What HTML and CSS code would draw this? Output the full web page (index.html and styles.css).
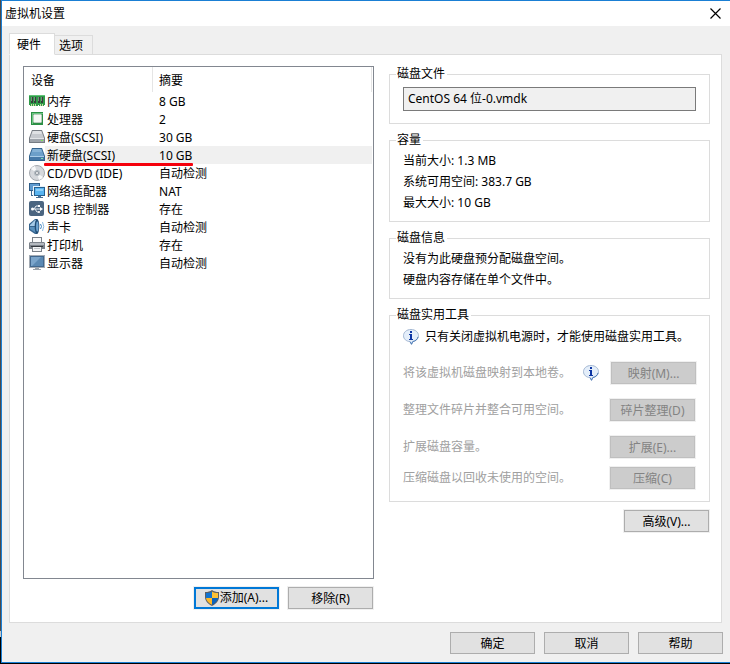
FILE: index.html
```html
<!DOCTYPE html>
<html lang="zh-CN">
<head>
    <meta charset="UTF-8">
    <meta name="viewport" content="width=device-width, initial-scale=1.0">
    <title>虚拟机设置</title>
    <link rel="stylesheet" href="styles.css">
</head>
<body>
    <div class="window">
        <header class="titlebar">
            <h1>虚拟机设置</h1>
            <button type="button" class="close" aria-label="关闭">
                <svg width="11" height="11" viewBox="0 0 11 11"><path d="M.5.5l10 10M10.5.5l-10 10" stroke="#000" stroke-width="1.2"/></svg>
            </button>
        </header>

        <div class="tabs" role="tablist">
            <button type="button" class="tab active" role="tab" aria-selected="true">硬件</button>
            <button type="button" class="tab" role="tab" aria-selected="false">选项</button>
        </div>

        <main class="panel">
            <section class="devices">
                <div class="device-list">
                    <table>
                        <colgroup>
                            <col class="w-icon">
                            <col class="w-name">
                            <col>
                        </colgroup>
                        <thead>
                            <tr>
                                <th colspan="2" class="col-name">设备</th>
                                <th>摘要</th>
                            </tr>
                        </thead>
                        <tbody>
                            <tr>
                                <td class="icon">
                                    <svg width="16" height="16" viewBox="0 0 16 16"><path d="M0 2h16v10H15v1h-5v-1H9v1H1v-1H0z" fill="#2f9a48"/><path d="M0 2h16v1H0z" fill="#62c377"/><path d="M2 4h2v6H2zM5 4h2v6H5zM9 4h2v6H9zM12 4h2v6h-2z" fill="#35403a"/><path d="M2 4h1v4H2zM5 4h1v4H5zM9 4h1v4H9zM12 4h1v4h-1z" fill="#7b8980"/><path d="M2 11h1v2H2zM4 11h1v2H4zM6 11h1v2H6zM11 11h1v2h-1zM13 11h1v2h-1z" fill="#c9d8a2"/></svg>
                                </td>
                                <td class="name">内存</td>
                                <td>8 GB</td>
                            </tr>
                            <tr>
                                <td class="icon">
                                    <svg width="16" height="16" viewBox="0 0 16 16"><path d="M2 1h12v13H2z" fill="#2c8f45"/><path d="M3 2h11v1H4v10H3z" fill="#6cc683"/><path d="M5 3h7l1 1v7l-1 1H5l-1-1V4z" fill="#b9cdbd"/><path d="M5 4h7v7H5z" fill="#f5f8f5"/></svg>
                                </td>
                                <td class="name">处理器</td>
                                <td>2</td>
                            </tr>
                            <tr>
                                <td class="icon">
                                    <svg width="16" height="16" viewBox="0 0 16 16"><path d="M3 1h10l3 8v5H0V9z" fill="#777c83"/><path d="M3.500 2h9l2.500 7H1z" fill="#c6c9ce"/><path d="M4 2h8l1 3H3z" fill="#dfe1e4"/><path d="M1 9h14v4H1z" fill="#9fa4ab"/><path d="M1 9h14v1H1z" fill="#e2e4e7"/><path d="M12 11h2v1h-2z" fill="#7ee45d"/></svg>
                                </td>
                                <td class="name">硬盘(SCSI)</td>
                                <td>30 GB</td>
                            </tr>
                            <tr class="selected">
                                <td class="icon">
                                    <svg width="16" height="16" viewBox="0 0 16 16"><path d="M3 1h10l3 8v5H0V9z" fill="#34648f"/><path d="M3.500 2h9l2.500 7H1z" fill="#6c9fc9"/><path d="M4 2h8l1 3H3z" fill="#85b2d6"/><path d="M1 9h14v4H1z" fill="#4679a8"/><path d="M1 9h14v1H1z" fill="#a8cce8"/><path d="M12 11h2v1h-2z" fill="#7ee4b0"/></svg>
                                </td>
                                <td class="name">新硬盘(SCSI)</td>
                                <td>10 GB</td>
                            </tr>
                            <tr>
                                <td class="icon">
                                    <svg width="16" height="16" viewBox="0 0 16 16"><circle cx="8" cy="8" r="7.500" fill="#d5d8dc" stroke="#a3a8ae"/><path d="M8 8L2 4a7 7 0 0 1 4-3zM8 8l6 4a7 7 0 0 1-4 3z" fill="#f7f8f9"/><circle cx="8" cy="8" r="3" fill="#b3bac1"/><circle cx="8" cy="8" r="1.500" fill="#fff" stroke="#8d959d"/></svg>
                                </td>
                                <td class="name">CD/DVD (IDE)</td>
                                <td>自动检测</td>
                            </tr>
                            <tr>
                                <td class="icon">
                                    <svg width="16" height="16" viewBox="0 0 16 16"><path d="M0 0h11v8H0z" fill="#2e5d88"/><path d="M1 1h9v6H1z" fill="#5f9bd0"/><path d="M2 8h1v4h3v1H2z" fill="#3f6c94"/><path d="M4 3h12v10H4z" fill="#e6f1fa"/><path d="M5 4h11v9H5z" fill="#27608f"/><path d="M6 5h9v7H6z" fill="#58b4f0"/><path d="M7 6h7v2H7z" fill="#8fd0fa"/><path d="M9 13h3v1h2v1H7v-1h2z" fill="#466f94"/></svg>
                                </td>
                                <td class="name">网络适配器</td>
                                <td>NAT</td>
                            </tr>
                            <tr>
                                <td class="icon">
                                    <svg width="16" height="16" viewBox="0 0 16 16"><rect width="15" height="15" rx="2" fill="#4b6580"/><path d="M3 8h9M5 8l2-3h2M6 8l2 3h2" fill="none" stroke="#e8edf2"/><circle cx="3.500" cy="8" r="1.500" fill="#fff"/><path d="M11 6l3 2-3 2z" fill="#fff"/><path d="M9 4h2v2H9z" fill="#fff"/><circle cx="10" cy="11" r="1" fill="#fff"/></svg>
                                </td>
                                <td class="name">USB 控制器</td>
                                <td>存在</td>
                            </tr>
                            <tr>
                                <td class="icon">
                                    <svg width="16" height="16" viewBox="0 0 16 16"><path d="M0 5l6-5h2v15H6l-6-4z" fill="#37658f"/><path d="M1 6l5-5h1v6H1z" fill="#a6cbe8"/><path d="M1 8h6v6l-6-4z" fill="#5b91bd"/><ellipse cx="8" cy="7.500" rx="2.300" ry="7.500" fill="#214d75"/><ellipse cx="8.300" cy="7.500" rx="1.200" ry="5" fill="#6fa5d2"/><path d="M11.500 5q2 2.500 0 5" fill="none" stroke="#3b82bf"/><path d="M13.500 3q2.500 4.500 0 9" fill="none" stroke="#8bb9df"/></svg>
                                </td>
                                <td class="name">声卡</td>
                                <td>自动检测</td>
                            </tr>
                            <tr>
                                <td class="icon">
                                    <svg width="16" height="16" viewBox="0 0 16 16"><path d="M3 0h10v6H3z" fill="#7b8188"/><path d="M4 1h8v5H4z" fill="#fafafa"/><path d="M1 5h14l1 1v6H0V6z" fill="#7c828a"/><path d="M1 6h14v2H1z" fill="#b4b9bf"/><path d="M2 9h12v1H2z" fill="#33383e"/><path d="M3 10h10v5H3z" fill="#7b8188"/><path d="M4 10h8v4H4z" fill="#f4f5f6"/><path d="M5 11h6v1H5z" fill="#c1c5c9"/></svg>
                                </td>
                                <td class="name">打印机</td>
                                <td>存在</td>
                            </tr>
                            <tr>
                                <td class="icon">
                                    <svg width="16" height="16" viewBox="0 0 16 16"><path d="M0 0h16v13H0z" fill="#a3abb4"/><path d="M1 1h14v11H1z" fill="#42688e"/><path d="M2 2h12v9H2z" fill="#5b89b3"/><path d="M2 2h10L3 11H2z" fill="#7ba5cb"/><path d="M6 13h4v1h2v1H4v-1h2z" fill="#9aa2aa"/></svg>
                                </td>
                                <td class="name">显示器</td>
                                <td>自动检测</td>
                            </tr>
                        </tbody>
                    </table>
                </div>
                <div class="buttons">
                    <button type="button" class="btn btn-default">
                        <svg width="14" height="16" viewBox="0 0 14 16"><path d="M7 0c2 1.500 4 2 7 2v5c0 4-3 7-7 9-4-2-7-5-7-9V2c3 0 5-.5 7-2z" fill="#5a5f66"/><path d="M7 1.500V8H1V3c2.500 0 4.500-.5 6-1.500z" fill="#1173d0"/><path d="M7 1.500V8h6V3c-2.500 0-4.500-.5-6-1.500z" fill="#fdc135"/><path d="M1 8h6v6.800C3.500 13 1.300 11 1 8z" fill="#fdb827"/><path d="M13 8H7v6.800c3.500-1.800 5.700-3.800 6-6.800z" fill="#0b63bd"/></svg>
                        <span>添加(A)...</span>
                    </button>
                    <button type="button" class="btn">移除(R)</button>
                </div>
            </section>

            <section class="details">
                <fieldset>
                    <legend>磁盘文件</legend>
                    <input type="text" class="disk-file" value="CentOS 64 位-0.vmdk" aria-label="磁盘文件" readonly>
                </fieldset>

                <fieldset class="info">
                    <legend>容量</legend>
                    <p>当前大小: 1.3 MB</p>
                    <p>系统可用空间: 383.7 GB</p>
                    <p>最大大小: 10 GB</p>
                </fieldset>

                <fieldset class="info">
                    <legend>磁盘信息</legend>
                    <p>没有为此硬盘预分配磁盘空间。</p>
                    <p>硬盘内容存储在单个文件中。</p>
                </fieldset>

                <fieldset class="tools">
                    <legend>磁盘实用工具</legend>
                    <p class="notice">
                        <svg width="16" height="16" viewBox="0 0 16 16"><path d="M8 .5c4.300 0 7.500 2.600 7.500 6.200 0 3-2.300 5.200-5.500 5.900L8.500 15.500 7 12.700C3.200 12.200.5 10 .5 6.700.5 3.100 3.700.5 8 .5z" fill="#e4eefa" stroke="#a3b7d2"/><path d="M15 8c-.6 2.500-2.600 4-5.300 4.600l-1.200 2.600L7.200 12.700" fill="none" stroke="#4d7cb8"/><path d="M7 2h2v2H7zM6 5h3v5h1v1H6v-1h1V6H6z" fill="#0d36a4"/></svg>
                        <span>只有关闭虚拟机电源时，才能使用磁盘实用工具。</span>
                    </p>
                    <div class="tool">
                        <span>将该虚拟机磁盘映射到本地卷。</span>
                        <svg width="16" height="16" viewBox="0 0 16 16"><path d="M8 .5c4.300 0 7.500 2.600 7.500 6.200 0 3-2.300 5.200-5.500 5.900L8.500 15.500 7 12.700C3.200 12.200.5 10 .5 6.700.5 3.100 3.700.5 8 .5z" fill="#e4eefa" stroke="#a3b7d2"/><path d="M15 8c-.6 2.500-2.600 4-5.300 4.600l-1.200 2.600L7.200 12.700" fill="none" stroke="#4d7cb8"/><path d="M7 2h2v2H7zM6 5h3v5h1v1H6v-1h1V6H6z" fill="#0d36a4"/></svg>
                        <button type="button" class="btn" disabled>映射(M)...</button>
                    </div>
                    <div class="tool">
                        <span>整理文件碎片并整合可用空间。</span>
                        <button type="button" class="btn" disabled>碎片整理(D)</button>
                    </div>
                    <div class="tool">
                        <span>扩展磁盘容量。</span>
                        <button type="button" class="btn" disabled>扩展(E)...</button>
                    </div>
                    <div class="tool tight">
                        <span>压缩磁盘以回收未使用的空间。</span>
                        <button type="button" class="btn" disabled>压缩(C)</button>
                    </div>
                </fieldset>

                <button type="button" class="btn advanced">高级(V)...</button>
            </section>
        </main>

        <footer>
            <button type="button" class="btn">确定</button>
            <button type="button" class="btn">取消</button>
            <button type="button" class="btn">帮助</button>
        </footer>
    </div>
</body>
</html>
```

FILE: styles.css
```css
* {
    box-sizing: border-box;
    margin: 0;
    padding: 0;
}

body {
    display: flex;
    min-height: 100vh;
    padding: 0 0 1px 1px;
    background: linear-gradient(#4a4a4c 95%, #c8c8c8 95%, #c8c8c8 96%, #000 96%);
    color: #000;
}

body, button, input {
    font-family: "Noto Sans", "Noto Sans CJK SC", sans-serif;
    font-size: 12px;
    line-height: 16px;
}

svg {
    display: block;
    flex: none;
}

.window {
    flex: 1;
    display: flex;
    flex-direction: column;
    border: 1px solid #1a7fd4;
    border-right: none;
    background-color: #f0f0f0;
}

/* title bar */
.titlebar {
    display: flex;
    align-items: center;
    justify-content: space-between;
    height: 25px;
    padding: 0 9px 0 3px;
    background: white;
}

h1 {
    font-size: 12px;
    font-weight: normal;
}

.close {
    border: none;
    background: none;
}

/* tabs */
.tabs {
    display: flex;
    align-items: flex-end;
    height: 29px;
    margin-bottom: -1px;
    padding: 0 7px;
}

.tab {
    height: 20px;
    padding: 2px 9px 0 4px;
    border: 1px solid #dcdcdc;
    border-left: none;
    background-color: #f0f0f0;
}

.tab.active {
    height: 22px;
    padding: 1px 13px 0 7px;
    border-left: 1px solid #dcdcdc;
    border-bottom-color: white;
    background-color: white;
    z-index: 1;
}

.panel {
    flex: 1;
    display: flex;
    gap: 15px;
    margin: 0 8px 0 7px;
    padding: 11px 11px 13px 13px;
    border: 1px solid #dcdcdc;
    background: white;
}

/* device list */
.devices {
    flex: 351;
    display: flex;
    flex-direction: column;
    gap: 8px;
    min-width: 0;
}

.device-list {
    flex: 1;
    padding: 0 1px 0 0;
    border: 1px solid #828790;
}

table {
    width: 100%;
    border-collapse: separate;
    border-spacing: 0;
    table-layout: fixed;
}

.w-icon {
    width: 21px;
}

.w-name {
    width: 108px;
}

th {
    height: 25px;
    padding: 3px 0 0 6px;
    border-right: 1px solid #e5e5e5;
    font-weight: normal;
    text-align: left;
}

.col-name {
    padding-left: 7px;
}

td {
    height: 18px;
    padding: 2px 0 0 6px;
    white-space: nowrap;
}

.icon {
    padding: 0 0 0 5px;
}

.name {
    position: relative;
    padding-left: 2px;
}

.selected td:not(.icon) {
    background-color: #f0f0f0;
}

.selected .name::after {
    content: "";
    position: absolute;
    top: 17px;
    left: -1px;
    width: 149px;
    height: 3px;
    border-radius: 1px;
    background: #f5000c;
    z-index: 1;
}

/* buttons */
.buttons {
    display: flex;
    justify-content: flex-end;
    gap: 8px;
}

.btn {
    display: flex;
    align-items: center;
    justify-content: center;
    flex: none;
    width: 85px;
    height: 22px;
    padding-top: 2px;
    border: 1px solid #adadad;
    background-color: #e1e1e1;
    color: #000;
}

.panel .btn {
    margin-right: 1px;
    box-shadow: 0 0 0 1px #f0f0f0;
}

.btn-default {
    gap: 1px;
    padding-top: 0;
    border: 2px solid #0078d7;
}

.btn:disabled {
    border-color: #bfbfbf;
    background-color: #cccccc;
    color: #838383;
}

/* details */
.details {
    flex: 321;
    display: flex;
    flex-direction: column;
    gap: 8px;
    min-width: 0;
}

fieldset {
    min-width: 0;
    padding: 5px 13px 12px;
    border: 1px solid #dcdcdc;
}

legend {
    margin-left: -7px;
    padding: 0 2px 0 1px;
}

.disk-file {
    display: block;
    width: 100%;
    height: 24px;
    padding: 0 4px 2px;
    border: 1px solid #7a7a7a;
    background-color: #f0f0f0;
}

.info {
    padding-top: 2px;
    padding-bottom: 8px;
}

.info p {
    line-height: 21px;
}

.tools {
    padding-top: 4px;
}

.notice {
    display: flex;
    align-items: center;
    gap: 6px;
    height: 20px;
    white-space: nowrap;
}

.tool {
    display: flex;
    align-items: center;
    justify-content: space-between;
    gap: 12px;
    margin-top: 15px;
    color: #a0a0a0;
    white-space: nowrap;
}

.tool.tight {
    margin-top: 9px;
}

.tool span {
    flex: 1;
}

.advanced {
    align-self: flex-end;
}

footer {
    display: flex;
    justify-content: flex-end;
    gap: 9px;
    padding: 9px 7px 8px;
}
```
